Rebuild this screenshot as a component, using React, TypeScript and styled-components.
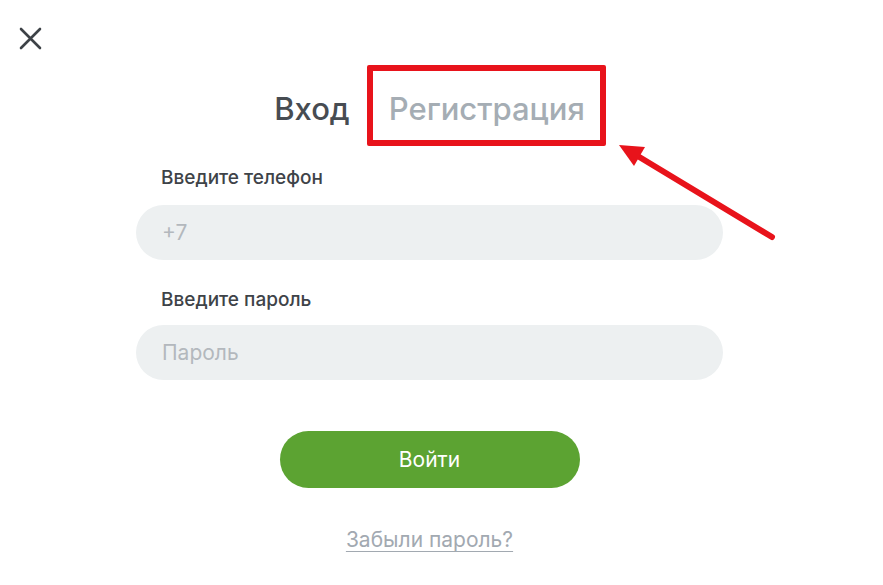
import React from 'react'
import styled, { createGlobalStyle } from 'styled-components'

const GlobalStyle = createGlobalStyle`
    html, body {
        margin: 0;
        padding: 0;
        background: #ffffff;
    }
    body {
        font-family: Inter, 'Noto Sans', sans-serif;
    }
`

const Page = styled.div`
    position: relative;
    width: 883px;
    height: 585px;
    overflow: hidden;
    background: #fff;
`

const CloseButton = styled.button`
    display: block;
    margin: 27px 0 0 19px;
    padding: 0;
    width: 23px;
    height: 23px;
    border: none;
    background: none;
    cursor: pointer;
`

const Form = styled.div`
    width: 587px;
    margin: 38px 0 0 136px;
    display: flex;
    flex-direction: column;
`

const Tabs = styled.div`
    display: flex;
    justify-content: center;
    gap: 39px;
    height: 40px;
    align-items: center;
`

const Tab = styled.div<{ $active?: boolean }>`
    font-size: 31px;
    font-weight: 500;
    color: ${(p) => (p.$active ? '#474c52' : '#a5adb4')};
    cursor: pointer;
`

const Label = styled.div<{ $top: number }>`
    margin: ${(p) => p.$top}px 0 0 25px;
    font-size: 19px;
    font-weight: 500;
    color: #3e4348;
    line-height: 24px;
`

const Input = styled.input<{ $top: number }>`
    box-sizing: border-box;
    margin-top: ${(p) => p.$top}px;
    width: 100%;
    height: 55px;
    border: none;
    border-radius: 28px;
    background: #edf0f1;
    padding: 0 26px;
    font-family: Inter, 'Noto Sans', sans-serif;
    font-size: 21px;
    color: #3e4348;
    outline: none;

    &::placeholder {
        color: #b3b8bd;
    }
`

const SubmitButton = styled.button`
    align-self: center;
    margin-top: 51px;
    width: 300px;
    height: 57px;
    border: none;
    border-radius: 29px;
    background: #5ca332;
    color: #fff;
    font-family: Inter, 'Noto Sans', sans-serif;
    font-size: 21px;
    font-weight: 400;
    cursor: pointer;
`

const ForgotLink = styled.a`
    align-self: center;
    margin-top: 39px;
    font-size: 21px;
    line-height: 25px;
    color: #a2a9b1;
    text-decoration: underline;
    text-underline-offset: 4px;
    text-decoration-thickness: 1px;
    cursor: pointer;
`

const Highlight = styled.div`
    position: absolute;
    left: 367px;
    top: 65px;
    width: 239px;
    height: 81px;
    box-sizing: border-box;
    border: 6px solid #e8131b;
    border-radius: 2px;
    pointer-events: none;
`

const ArrowLayer = styled.svg`
    position: absolute;
    left: 0;
    top: 0;
    pointer-events: none;
`

export default function App() {
    return (
        <Page>
            <GlobalStyle />
            <CloseButton aria-label="Закрыть">
                <svg width="23" height="23" viewBox="0 0 23 23">
                    <path
                        d="M2 2 L21 21 M21 2 L2 21"
                        stroke="#3d4247"
                        strokeWidth="2.6"
                        strokeLinecap="round"
                    />
                </svg>
            </CloseButton>
            <Form>
                <Tabs>
                    <Tab $active>Вход</Tab>
                    <Tab>Регистрация</Tab>
                </Tabs>
                <Label $top={38}>Введите телефон</Label>
                <Input $top={15} placeholder="+7" />
                <Label $top={28}>Введите пароль</Label>
                <Input $top={13} placeholder="Пароль" type="password" />
                <SubmitButton>Войти</SubmitButton>
                <ForgotLink>Забыли пароль?</ForgotLink>
            </Form>
            <Highlight />
            <ArrowLayer width="883" height="585" viewBox="0 0 883 585">
                <line
                    x1="772"
                    y1="237"
                    x2="636"
                    y2="155"
                    stroke="#e8131b"
                    strokeWidth="6"
                    strokeLinecap="round"
                />
                <polygon points="619,145 645,147 634,166" fill="#e8131b" />
            </ArrowLayer>
        </Page>
    )
}
